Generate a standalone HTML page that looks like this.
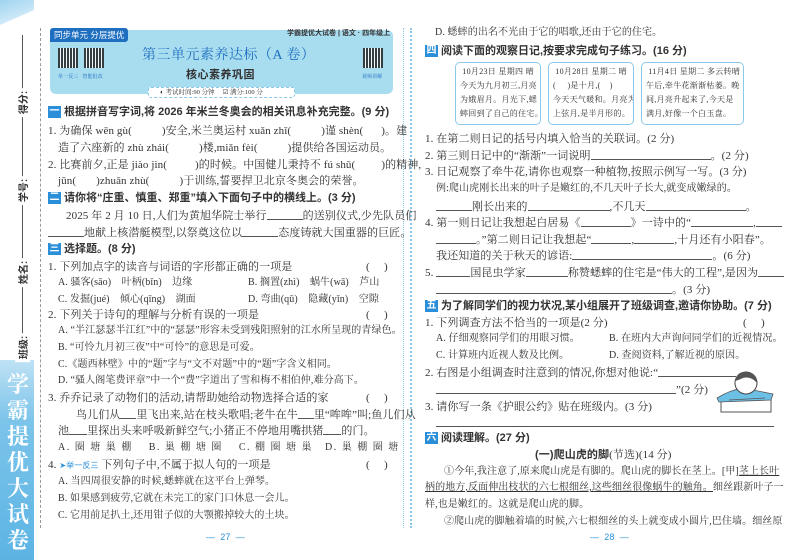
<!DOCTYPE html>
<html><head><meta charset="utf-8"><style>
*{margin:0;padding:0;box-sizing:border-box}
body{width:800px;height:560px;background:#fff;position:relative;overflow:hidden;font-family:"Liberation Serif","Noto Serif CJK SC",serif;color:#333}
.l{position:absolute;white-space:nowrap;font-size:11px;line-height:14px;letter-spacing:0.1px}
.s{font-family:"Liberation Sans","Noto Sans CJK SC",sans-serif}
.h{font-family:"Liberation Sans","Noto Sans CJK SC",sans-serif;font-weight:bold;font-size:11px;letter-spacing:0}
.n{display:inline-block;background:#2a8fd8;color:#fff;font-size:10px;width:13px;height:12px;line-height:12px;text-align:center;margin-right:3px;vertical-align:1px}
.u{display:inline-block;border-bottom:1px solid #555;height:11px;vertical-align:-1px}
.box{position:absolute;border:1.5px solid #8cc8ea;border-radius:5px;font-size:8px;line-height:14px;padding:2px 4px;letter-spacing:0.3px;white-space:nowrap;overflow:hidden}
.qr{position:absolute;width:20px;height:20px;background:repeating-linear-gradient(90deg,#222 0 2px,#fff 2px 3px),#222;opacity:.85}
.vl{position:absolute;font-family:"Liberation Sans","Noto Sans CJK SC",sans-serif;font-weight:bold;font-size:10px;color:#333;transform:rotate(-90deg);transform-origin:center;background:#fff;padding:0 3px;white-space:nowrap}
</style></head><body>
<div style="position:absolute;left:0;top:0;width:34px;height:25px;background:linear-gradient(160deg,#9fd3f0,#e8f5fc);clip-path:polygon(0 0,100% 0,100% 40%,0 100%)"></div>
<div style="position:absolute;left:0;top:360px;width:34px;height:200px;background:linear-gradient(180deg,#bfe2f5,#7cc4ea 30%,#5cb4e4)"></div>
<div style="position:absolute;left:5px;top:372px;width:26px;font-size:22px;line-height:26px;color:#fff;text-align:center;font-family:'Liberation Serif','Noto Serif CJK SC',serif;font-weight:bold">学<br>霸<br>提<br>优<br>大<br>试<br>卷</div>
<div style="position:absolute;left:22px;top:35px;width:1px;height:320px;background:#555"></div>
<div class="vl" style="left:8px;top:95px">得分:</div>
<div class="vl" style="left:8px;top:183px">学号:</div>
<div class="vl" style="left:8px;top:265px">姓名:</div>
<div class="vl" style="left:8px;top:340px">班级:</div>
<div style="position:absolute;left:40px;top:28px;height:500px;border-left:1px dashed #999"></div>
<div style="position:absolute;left:403px;top:28px;height:500px;border-left:1px dotted #8cc8ea"></div>
<div style="position:absolute;left:410px;top:28px;height:500px;border-left:2px dotted #8cc8ea"></div>

<div style="position:absolute;left:50px;top:30px;width:343px;height:64px;background:#a8dcef;border-radius:6px"></div>
<div style="position:absolute;left:50px;top:28px;width:78px;height:14px;background:#1f6fc0;border-radius:3px 3px 3px 0"></div>
<div class="l s" style="left:54px;top:28px;color:#fff;font-size:8.5px;letter-spacing:0">同步单元 分层提优</div>
<div class="l s" style="left:287px;top:27px;font-size:7px;font-weight:bold;letter-spacing:0">学霸提优大试卷 | 语文 · 四年级上</div>
<div class="qr" style="left:58px;top:48px"></div><div class="qr" style="left:84px;top:48px"></div><div class="qr" style="left:363px;top:48px"></div>
<div class="l" style="left:58px;top:71px;font-size:5px;color:#1f6fc0">单一反三 &nbsp; 智能批改</div>
<div class="l" style="left:362px;top:71px;font-size:5px;color:#1f6fc0">视频讲解</div>
<div class="l" style="left:142px;top:47px;font-size:14px;line-height:18px;color:#1f6fc0;letter-spacing:0.5px">第三单元素养达标（A 卷）</div>
<div class="l s" style="left:186px;top:68px;font-size:11px;font-weight:bold;letter-spacing:0.5px">核心素养巩固</div>
<div style="position:absolute;left:148px;top:87px;width:147px;height:11px;background:#fff;border:1px dashed #8cc8ea;border-radius:3px"></div>
<div class="l" style="left:160px;top:86px;font-size:6.5px;letter-spacing:0">◐ 考试时间:90 分钟 &nbsp; &nbsp; ☑ 满分:100 分</div>

<div class="l h" style="left:48px;top:105px"><span class="n">一</span>根据拼音写字词,将 2026 年米兰冬奥会的相关讯息补充完整。(9 分)</div>
<div class="l" style="left:48px;top:124px">1. 为确保 wēn gù(<span style="display:inline-block;width:30px"></span>)安全,米兰奥运村 xuǎn zhǐ(<span style="display:inline-block;width:30px"></span>)谨 shèn(<span style="display:inline-block;width:18px"></span>)。建</div>
<div class="l" style="left:58px;top:141px">造了六座新的 zhù zhái(<span style="display:inline-block;width:30px"></span>)楼,miǎn fèi(<span style="display:inline-block;width:30px"></span>)提供给各国运动员。</div>
<div class="l" style="left:48px;top:158px">2. 比赛前夕,正是 jiào jìn(<span style="display:inline-block;width:28px"></span>)的时候。中国健儿秉持不 fú shū(<span style="display:inline-block;width:26px"></span>)的精神,</div>
<div class="l" style="left:58px;top:174px">jūn(<span style="display:inline-block;width:20px"></span>)zhuān zhù(<span style="display:inline-block;width:30px"></span>)于训练,誓要捍卫北京冬奥会的荣誉。</div>
<div class="l h" style="left:48px;top:191px"><span class="n">二</span>请你将“庄重、慎重、郑重”填入下面句子中的横线上。(3 分)</div>
<div class="l" style="left:66px;top:209px">2025 年 2 月 10 日,人们为黄旭华院士举行<span class="u" style="width:36px"></span>的送别仪式,少先队员们</div>
<div class="l" style="left:48px;top:226px"><span class="u" style="width:36px"></span>地献上核潜艇模型,以祭奠这位以<span class="u" style="width:36px"></span>态度铸就大国重器的巨匠。</div>
<div class="l h" style="left:48px;top:242px"><span class="n">三</span>选择题。(8 分)</div>
<div class="l" style="left:48px;top:260px">1. 下列加点字的读音与词语的字形都正确的一项是</div><div class="l" style="left:366px;top:260px">(&nbsp;&nbsp;&nbsp;&nbsp;&nbsp;)</div>
<div class="l" style="left:58px;top:276px;font-size:10px">A. 骚客(sāo) &nbsp;&nbsp; 叶柄(bǐn) &nbsp;&nbsp; 边缘</div><div class="l" style="left:248px;top:276px;font-size:10px">B. 搁置(zhì) &nbsp;&nbsp; 蜗牛(wā) &nbsp;&nbsp; 芦山</div>
<div class="l" style="left:58px;top:293px;font-size:10px">C. 发掘(jué) &nbsp;&nbsp; 倾心(qīng) &nbsp;&nbsp; 湖面</div><div class="l" style="left:248px;top:293px;font-size:10px">D. 弯曲(qū) &nbsp;&nbsp; 隐藏(yǐn) &nbsp;&nbsp; 空隙</div>
<div class="l" style="left:48px;top:308px">2. 下列关于诗句的理解与分析有误的一项是</div><div class="l" style="left:366px;top:308px">(&nbsp;&nbsp;&nbsp;&nbsp;&nbsp;)</div>
<div class="l" style="left:58px;top:324px;font-size:10px">A. “半江瑟瑟半江红”中的“瑟瑟”形容未受到残阳照射的江水所呈现的青绿色。</div>
<div class="l" style="left:58px;top:341px;font-size:10px">B. “可怜九月初三夜”中“可怜”的意思是可爱。</div>
<div class="l" style="left:58px;top:358px;font-size:10px">C.《题西林壁》中的“题”字与“文不对题”中的“题”字含义相同。</div>
<div class="l" style="left:58px;top:374px;font-size:10px">D. “骚人阁笔费评章”中一个“费”字道出了雪和梅不相伯仲,难分高下。</div>
<div class="l" style="left:48px;top:391px">3. 乔乔记录了动物们的活动,请帮助她给动物选择合适的家</div><div class="l" style="left:366px;top:391px">(&nbsp;&nbsp;&nbsp;&nbsp;&nbsp;)</div>
<div class="l" style="left:76px;top:408px">鸟儿们从<span class="u" style="width:16px"></span>里飞出来,站在枝头歌唱;老牛在牛<span class="u" style="width:16px"></span>里“哞哞”叫;鱼儿们从</div>
<div class="l" style="left:58px;top:424px">池<span class="u" style="width:18px"></span>里探出头来呼吸新鲜空气;小猪正不停地用嘴拱猪<span class="u" style="width:18px"></span>的门。</div>
<div class="l" style="left:58px;top:441px;font-size:10px;letter-spacing:1.5px">A. 圈 塘 巢 棚 &nbsp;&nbsp; B. 巢 棚 塘 圈 &nbsp;&nbsp; C. 棚 圈 塘 巢 &nbsp; D. 巢 棚 圈 塘</div>
<div class="l" style="left:48px;top:458px">4. <span class="s" style="color:#2a8fd8;font-size:8px">➤举一反三</span> 下列句子中,不属于拟人句的一项是</div><div class="l" style="left:366px;top:458px">(&nbsp;&nbsp;&nbsp;&nbsp;&nbsp;)</div>
<div class="l" style="left:58px;top:475px;font-size:10px">A. 当四周很安静的时候,蟋蟀就在这平台上弹琴。</div>
<div class="l" style="left:58px;top:492px;font-size:10px">B. 如果感到疲劳,它就在未完工的家门口休息一会儿。</div>
<div class="l" style="left:58px;top:509px;font-size:10px">C. 它用前足扒土,还用钳子似的大颚搬掉较大的土块。</div>
<div class="l s" style="left:206px;top:530px;color:#2a8fd8;font-size:9px">— &nbsp;27&nbsp; —</div>

<div class="l" style="left:435px;top:26px;font-size:10px">D. 蟋蟀的出名不光由于它的唱歌,还由于它的住宅。</div>
<div class="l h" style="left:425px;top:44px"><span class="n">四</span>阅读下面的观察日记,按要求完成句子练习。(16 分)</div>
<div class="box" style="left:455px;top:62px;width:86px;height:63px">&nbsp;10月23日 星期四 晴<br>今天为九月初三,月亮<br>为娥眉月。月光下,蟋<br>蟀回到了自己的住宅。</div>
<div class="box" style="left:548px;top:62px;width:86px;height:63px">&nbsp;10月28日 星期二 晴<br>(&nbsp;&nbsp;&nbsp;&nbsp;&nbsp;)是十月,(&nbsp;&nbsp;&nbsp;&nbsp;)<br>今天天气暖和。月亮为<br>上弦月,是半月形的。</div>
<div class="box" style="left:641px;top:62px;width:103px;height:63px">&nbsp;11月4日 星期二 多云转晴<br>午后,牵牛花渐渐枯萎。晚<br>间,月亮升起来了,今天是<br>满月,好像一个白玉盘。</div>
<div class="l" style="left:425px;top:132px">1. 在第二则日记的括号内填入恰当的关联词。(2 分)</div>
<div class="l" style="left:425px;top:149px">2. 第三则日记中的“渐渐”一词说明<span class="u" style="width:120px"></span>。(2 分)</div>
<div class="l" style="left:425px;top:165px">3. 日记观察了牵牛花,请你也观察一种植物,按照示例写一写。(3 分)</div>
<div class="l" style="left:436px;top:182px;font-size:10px">例:爬山虎刚长出来的叶子是嫩红的,不几天叶子长大,就变成嫩绿的。</div>
<div class="l" style="left:436px;top:200px"><span class="u" style="width:36px"></span>刚长出来的<span class="u" style="width:82px"></span>,不几天<span class="u" style="width:100px"></span>。</div>
<div class="l" style="left:425px;top:216px">4. 第一则日记让我想起白居易《<span class="u" style="width:50px"></span>》一诗中的“<span class="u" style="width:62px"></span>,<span class="u" style="width:26px"></span></div>
<div class="l" style="left:436px;top:233px"><span class="u" style="width:40px"></span>。”第二则日记让我想起“<span class="u" style="width:40px"></span>,<span class="u" style="width:40px"></span>,十月还有小阳春”。</div>
<div class="l" style="left:436px;top:249px">我还知道的关于秋天的谚语:<span class="u" style="width:140px"></span>。(6 分)</div>
<div class="l" style="left:425px;top:266px">5. <span class="u" style="width:34px"></span>国昆虫学家<span class="u" style="width:42px"></span>称赞蟋蟀的住宅是“伟大的工程”,是因为<span class="u" style="width:26px"></span></div>
<div class="l" style="left:436px;top:283px"><span class="u" style="width:236px"></span>。(3 分)</div>
<div class="l h" style="left:425px;top:299px"><span class="n">五</span>为了解同学们的视力状况,某小组展开了班级调查,邀请你协助。(7 分)</div>
<div class="l" style="left:425px;top:316px">1. 下列调查方法不恰当的一项是(2 分)</div><div class="l" style="left:743px;top:316px">(&nbsp;&nbsp;&nbsp;&nbsp;&nbsp;)</div>
<div class="l" style="left:436px;top:332px;font-size:10px">A. 仔细观察同学们的用眼习惯。</div><div class="l" style="left:609px;top:332px;font-size:10px">B. 在班内大声询问同学们的近视情况。</div>
<div class="l" style="left:436px;top:349px;font-size:10px">C. 计算班内近视人数及比例。</div><div class="l" style="left:609px;top:349px;font-size:10px">D. 查阅资料,了解近视的原因。</div>
<div class="l" style="left:425px;top:366px">2. 右图是小组调查时注意到的情况,你想对他说:“<span class="u" style="width:78px"></span></div>
<div class="l" style="left:436px;top:383px"><span class="u" style="width:240px"></span>”(2 分)</div>
<div class="l" style="left:425px;top:400px">3. 请你写一条《护眼公约》贴在班级内。(3 分)</div>
<div style="position:absolute;left:436px;top:426px;width:338px;border-top:1px solid #555"></div>
<svg style="position:absolute;left:715px;top:368px" width="60" height="50" viewBox="0 0 60 50">
<rect x="6" y="30" width="50" height="14" fill="#fff" stroke="#555"/>
<path d="M2 30 Q15 22 28 20 L58 26 L56 32 L4 34Z" fill="#6cc0e6" stroke="#555" stroke-width="0.8"/>
<circle cx="31" cy="15" r="11" fill="#fff" stroke="#444"/>
<path d="M20 13 Q22 3 32 4 Q42 5 42 15 Q36 8 28 10 Q24 12 20 13Z" fill="#555"/>
<path d="M14 32 L50 30" stroke="#555" stroke-width="0.8"/>
</svg>
<div class="l h" style="left:425px;top:431px"><span class="n">六</span>阅读理解。(27 分)</div>
<div class="l" style="left:535px;top:448px"><b class="s">(一)爬山虎的脚</b>(节选)(14 分)</div>
<div class="l" style="left:444px;top:465px;font-size:10px">①今年,我注意了,原来爬山虎是有脚的。爬山虎的脚长在茎上。[甲]<u>茎上长叶</u></div>
<div class="l" style="left:425px;top:481px;font-size:10px"><u>柄的地方,反面伸出枝状的六七根细丝,这些细丝很像蜗牛的触角。</u>细丝跟新叶子一</div>
<div class="l" style="left:425px;top:498px;font-size:10px">样,也是嫩红的。这就是爬山虎的脚。</div>
<div class="l" style="left:444px;top:515px;font-size:10px">②爬山虎的脚触着墙的时候,六七根细丝的头上就变成小圆片,巴住墙。细丝原</div>
<div class="l s" style="left:590px;top:530px;color:#2a8fd8;font-size:9px">— &nbsp;28&nbsp; —</div>
</body></html>
